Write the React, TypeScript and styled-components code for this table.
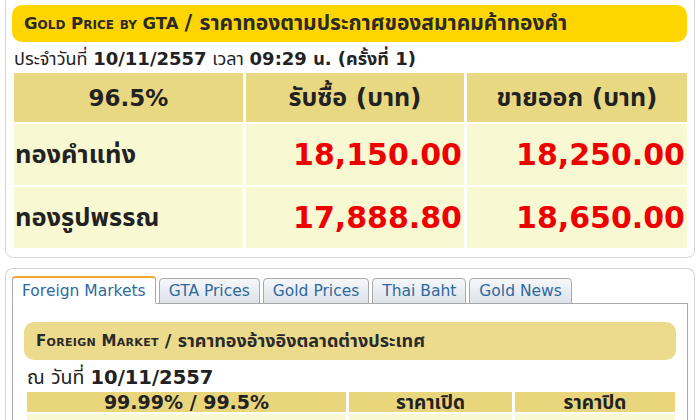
import React from "react";
import styled, { createGlobalStyle } from "styled-components";

const Global = createGlobalStyle`
  html, body { margin: 0; padding: 0; background: #fff; }
  body { width: 700px; height: 420px; overflow: hidden; font-family: "DejaVu Sans", "Noto Sans Thai", "Noto Sans", sans-serif; color: #222; }
`;

const Page = styled.div`
  display: flex;
  flex-direction: column;
  gap: 10px;
  padding: 0 5px;
  margin-top: -6px;
  height: 426px;
  box-sizing: border-box;
  overflow: hidden;
`;

const Card = styled.div`
  border: 1px solid #d4d4d4;
  border-radius: 8px;
  padding: 10px 7px 9px 6px;
  background: #fff;
  flex: none;
`;

const TitleBar = styled.div<{ $tone: "gold" | "tan" }>`
  background: ${(p) => (p.$tone === "gold" ? "#ffd500" : "#ecdb8c")};
  border-radius: 10px;
  height: ${(p) => (p.$tone === "gold" ? "37px" : "38px")};
  display: flex;
  align-items: center;
  padding-left: 12px;
  font-weight: bold;
  font-size: ${(p) => (p.$tone === "gold" ? "21px" : "18px")};
  color: #2a2a2a;
  white-space: nowrap;
`;

const Caps = styled.span<{ $size: number; $spacing: number }>`
  font-variant: small-caps;
  font-size: ${(p) => p.$size}px;
  letter-spacing: ${(p) => p.$spacing}px;
  margin-right: 6px;
`;

const DateLine = styled.div`
  font-size: 18px;
  line-height: 22px;
  padding: 6px 0 3px 2px;
  color: #222;
  white-space: nowrap;
  b { font-weight: bold; }
`;

const PriceGrid = styled.div`
  display: grid;
  grid-template-columns: 229px 218px 220px;
  grid-template-rows: 49px 61px 61px;
  gap: 2px 3px;
  margin-left: 2px;
`;

const HeadCell = styled.div<{ $size?: number }>`
  background: #e9d882;
  display: flex;
  align-items: center;
  justify-content: center;
  font-weight: bold;
  font-size: ${(p) => p.$size ?? 25}px;
  color: #222;
`;

const RowLabel = styled.div`
  background: #f8f8d2;
  display: flex;
  align-items: center;
  padding-left: 1px;
  font-weight: bold;
  font-size: 25.5px;
  color: #222;
`;

const Price = styled.div`
  background: #f8f8d2;
  display: flex;
  align-items: center;
  justify-content: flex-end;
  padding-right: 2px;
  font-weight: bold;
  font-size: 30px;
  color: #ee0000;
`;

const TabCard = styled.div`
  flex: 1;
  min-height: 0;
  overflow: hidden;
  border: 1px solid #d4d4d4;
  border-bottom: none;
  border-radius: 8px 8px 0 0;
  padding: 7px 6px 0 6px;
  background: #fff;
`;

const Tabs = styled.div`
  display: flex;
  gap: 3px;
  height: 28px;
  align-items: flex-end;
  position: relative;
  z-index: 1;
  margin-bottom: -1px;
`;

const Tab = styled.div<{ $active?: boolean }>`
  height: ${(p) => (p.$active ? "28px" : "26px")};
  box-sizing: border-box;
  padding: 0 9px;
  display: flex;
  align-items: center;
  font-size: 15.5px;
  color: #2e6a9e;
  border: 1px solid #a9a9a9;
  border-bottom: ${(p) => (p.$active ? "1px solid #fff" : "1px solid #a9a9a9")};
  border-top: ${(p) => (p.$active ? "2px solid #f0a830" : "1px solid #a9a9a9")};
  border-radius: 4px 4px 0 0;
  background: ${(p) => (p.$active ? "#fff" : "linear-gradient(#f5f7fa, #dde3ea)")};
`;

const Panel = styled.div`
  border: 1px solid #a9a9a9;
  border-bottom: none;
  padding: 18px 11px 0 11px;
  height: 200px;
`;

const SubDate = styled.div`
  font-size: 19.5px;
  line-height: 24px;
  padding: 6px 0 2px 3px;
  white-space: nowrap;
  b { font-weight: bold; }
`;

const MarketGrid = styled.div`
  display: grid;
  grid-template-columns: 319px 163px 160px;
  grid-auto-rows: 20px;
  gap: 2px 3px;
  margin-left: 3px;
`;

const MarketHead = styled.div<{ $light?: boolean }>`
  background: ${(p) => (p.$light ? "#f8f8d2" : "#e9d57c")};
  display: flex;
  align-items: center;
  justify-content: center;
  font-weight: bold;
  font-size: 19px;
  line-height: 20px;
  color: #222;
  overflow: hidden;
`;

export default function App() {
  return (
    <>
      <Global />
      <Page>
        <Card>
          <TitleBar $tone="gold">
            <Caps $size={16.5} $spacing={0}>Gold Price by GTA</Caps>/ ราคาทองตามประกาศของสมาคมค้าทองคำ
          </TitleBar>
          <DateLine>
            ประจำวันที่ <b>10/11/2557</b> เวลา <b>09:29 น. (ครั้งที่ 1)</b>
          </DateLine>
          <PriceGrid>
            <HeadCell $size={23}>96.5%</HeadCell>
            <HeadCell>รับซื้อ (บาท)</HeadCell>
            <HeadCell>ขายออก (บาท)</HeadCell>
            <RowLabel>ทองคำแท่ง</RowLabel>
            <Price>18,150.00</Price>
            <Price>18,250.00</Price>
            <RowLabel>ทองรูปพรรณ</RowLabel>
            <Price>17,888.80</Price>
            <Price>18,650.00</Price>
          </PriceGrid>
        </Card>
        <TabCard>
          <Tabs>
            <Tab $active>Foreign Markets</Tab>
            <Tab>GTA Prices</Tab>
            <Tab>Gold Prices</Tab>
            <Tab>Thai Baht</Tab>
            <Tab>Gold News</Tab>
          </Tabs>
          <Panel>
            <TitleBar $tone="tan">
              <Caps $size={15} $spacing={0.3}>Foreign Market</Caps>/ ราคาทองอ้างอิงตลาดต่างประเทศ
            </TitleBar>
            <SubDate>
              ณ วันที่ <b>10/11/2557</b>
            </SubDate>
            <MarketGrid>
              <MarketHead>99.99% / 99.5%</MarketHead>
              <MarketHead>ราคาเปิด</MarketHead>
              <MarketHead>ราคาปิด</MarketHead>
              <MarketHead $light />
              <MarketHead $light />
              <MarketHead $light />
            </MarketGrid>
          </Panel>
        </TabCard>
      </Page>
    </>
  );
}
